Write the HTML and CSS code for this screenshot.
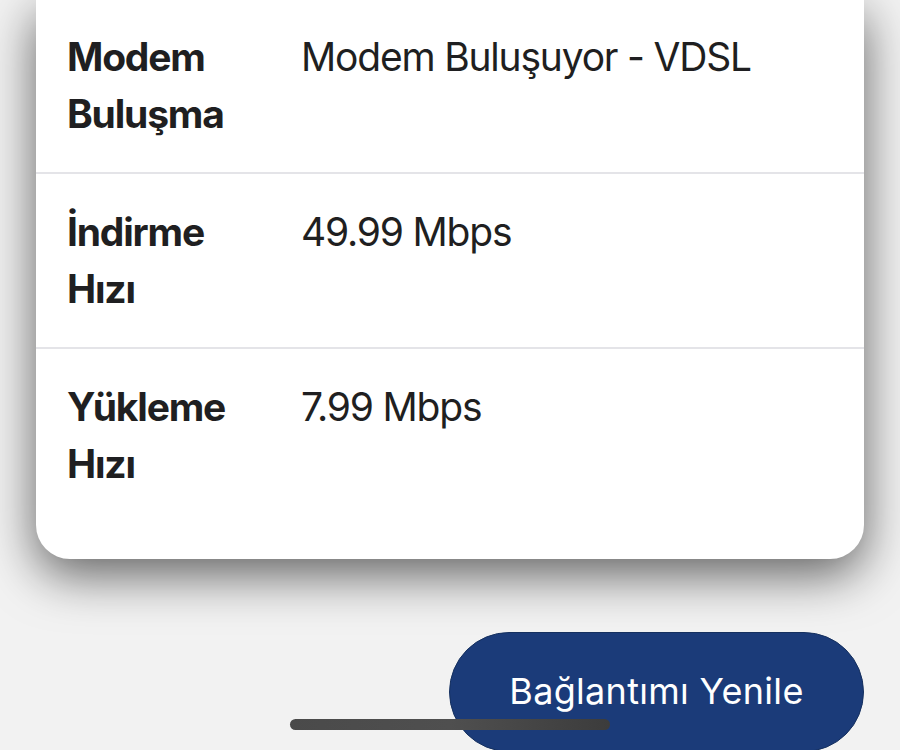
FILE: index.html
```html
<!DOCTYPE html>
<html lang="tr">
<head>
<meta charset="utf-8">
<link rel="stylesheet" href="styles.css">
</head>
<body>
<div class="screen">
  <div class="card">
    <div class="row">
      <div class="label">Modem Buluşma</div>
      <div class="value">Modem Buluşuyor - VDSL</div>
    </div>
    <div class="row">
      <div class="label">İndirme Hızı</div>
      <div class="value">49.99 Mbps</div>
    </div>
    <div class="row last">
      <div class="label">Yükleme Hızı</div>
      <div class="value">7.99 Mbps</div>
    </div>
  </div>
  <div class="actions">
    <button class="btn">Bağlantımı Yenile</button>
  </div>
  <div class="home-indicator"></div>
</div>
</body>
</html>
```

FILE: styles.css
```css
* { box-sizing: border-box; }
html, body {
  margin: 0;
  padding: 0;
  background: #f2f2f2;
}
.screen {
  position: relative;
  width: 900px;
  height: 750px;
  overflow: hidden;
  background: #f2f2f2;
  font-family: Inter, "Noto Sans", sans-serif;
  color: #1f1f21;
}
.card {
  margin: 0 36px;
  background: #ffffff;
  border-radius: 0 0 34px 34px;
  box-shadow: 0 16px 50px rgba(0, 0, 0, 0.6);
  padding-bottom: 37px;
}
.row {
  display: grid;
  grid-template-columns: 180px 1fr;
  column-gap: 54px;
  padding: 28px 31px 30px;
  border-bottom: 2px solid #e4e4e8;
  font-size: 39px;
  line-height: 57px;
  letter-spacing: -1.2px;
}
.row.last { border-bottom: none; }
.row + .row { padding-top: 29px; }
.label {
  font-weight: 700;
}
.value {
  font-weight: 400;
}
.actions {
  display: flex;
  justify-content: flex-end;
  padding: 73px 36px 0;
}
.btn {
  width: 415px;
  height: 120px;
  border-radius: 60px;
  border: 1px solid #15305f;
  background: #1b3b79;
  color: #ffffff;
  font-family: Inter, "Noto Sans", sans-serif;
  font-size: 36px;
  letter-spacing: 0.3px;
  font-weight: 400;
  display: flex;
  align-items: flex-start;
  justify-content: center;
  padding: 36px 0 0 0;
}
.home-indicator {
  position: absolute;
  left: 290px;
  top: 719px;
  width: 320px;
  height: 11px;
  border-radius: 6px;
  background: linear-gradient(90deg, #4a4a4a, #4f4f4f 50%, #3c3c3c);
}
```
